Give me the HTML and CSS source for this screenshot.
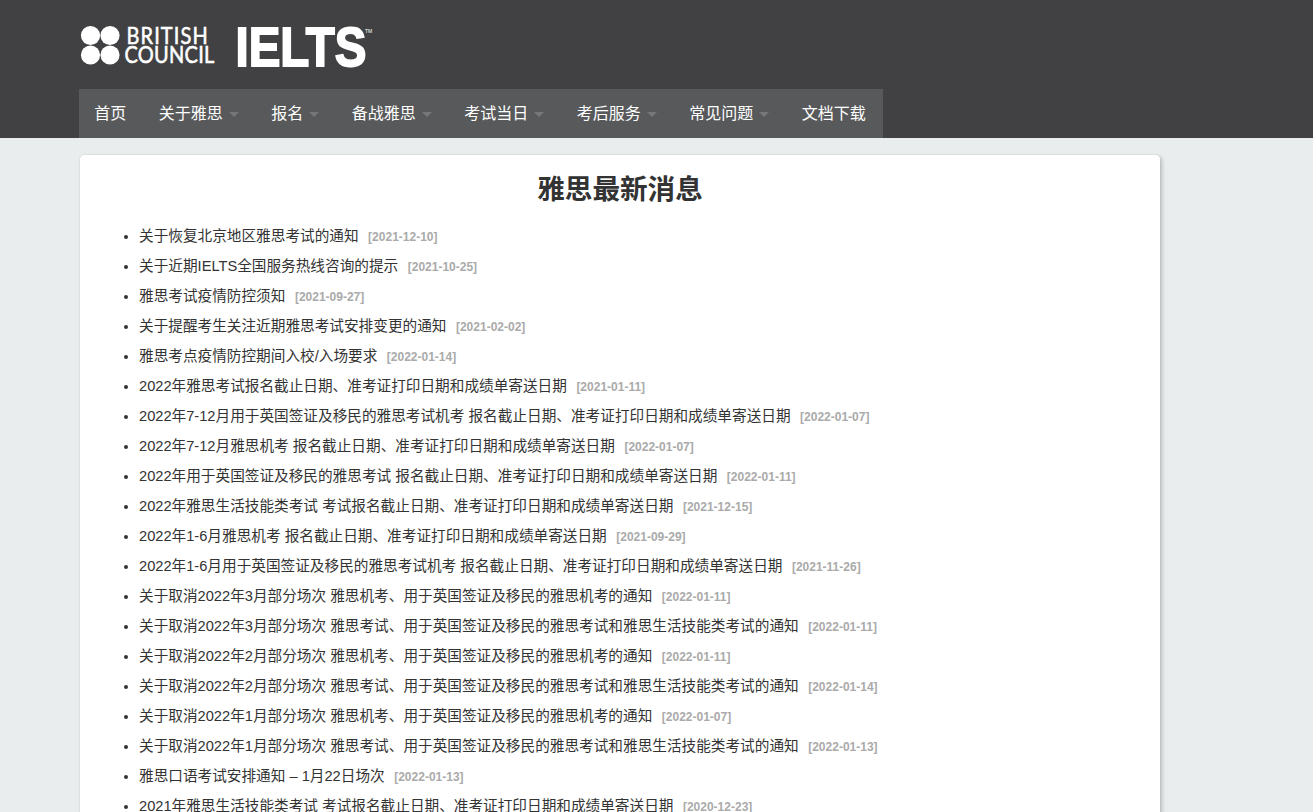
FILE: index.html
```html
<!DOCTYPE html>
<html lang="zh-CN">
<head>
<meta charset="utf-8">
<title>雅思最新消息</title>
<link rel="stylesheet" href="styles.css">
</head>
<body>
<header class="site-header">
  <div class="logo-row">
    <svg class="logo" width="300" height="44" viewBox="0 0 300 44" role="img" aria-label="British Council IELTS">
      <g fill="#fff">
        <circle cx="11.5" cy="11.5" r="9.6"/>
        <circle cx="31" cy="11.5" r="9.6"/>
        <circle cx="11.5" cy="31" r="9.6"/>
        <circle cx="31" cy="31" r="9.6"/>
        <text class="logo-bc logo-bc-top" transform="translate(47.5 20) scale(1 1.12)">BRITISH</text>
        <text class="logo-bc logo-bc-bottom" transform="translate(45.5 39) scale(1 1.12)">COUNCIL</text>
        <text class="logo-ielts" transform="translate(156.5 41.5) scale(1 1.15)">IELTS</text>
        <text class="logo-tm" x="286" y="8.5">TM</text>
      </g>
    </svg>
  </div>
  <nav class="main-nav">
    <a class="nav-item">首页</a>
    <a class="nav-item has-menu">关于雅思</a>
    <a class="nav-item has-menu">报名</a>
    <a class="nav-item has-menu">备战雅思</a>
    <a class="nav-item has-menu">考试当日</a>
    <a class="nav-item has-menu">考后服务</a>
    <a class="nav-item has-menu">常见问题</a>
    <a class="nav-item">文档下载</a>
  </nav>
</header>
<main class="card">
  <h1 class="card-title">雅思最新消息</h1>
  <ul class="news">
    <li><a>关于恢复北京地区雅思考试的通知</a><span class="date">[2021-12-10]</span></li>
    <li><a>关于近期IELTS全国服务热线咨询的提示</a><span class="date">[2021-10-25]</span></li>
    <li><a>雅思考试疫情防控须知</a><span class="date">[2021-09-27]</span></li>
    <li><a>关于提醒考生关注近期雅思考试安排变更的通知</a><span class="date">[2021-02-02]</span></li>
    <li><a>雅思考点疫情防控期间入校/入场要求</a><span class="date">[2022-01-14]</span></li>
    <li><a>2022年雅思考试报名截止日期、准考证打印日期和成绩单寄送日期</a><span class="date">[2021-01-11]</span></li>
    <li><a>2022年7-12月用于英国签证及移民的雅思考试机考 报名截止日期、准考证打印日期和成绩单寄送日期</a><span class="date">[2022-01-07]</span></li>
    <li><a>2022年7-12月雅思机考 报名截止日期、准考证打印日期和成绩单寄送日期</a><span class="date">[2022-01-07]</span></li>
    <li><a>2022年用于英国签证及移民的雅思考试 报名截止日期、准考证打印日期和成绩单寄送日期</a><span class="date">[2022-01-11]</span></li>
    <li><a>2022年雅思生活技能类考试 考试报名截止日期、准考证打印日期和成绩单寄送日期</a><span class="date">[2021-12-15]</span></li>
    <li><a>2022年1-6月雅思机考 报名截止日期、准考证打印日期和成绩单寄送日期</a><span class="date">[2021-09-29]</span></li>
    <li><a>2022年1-6月用于英国签证及移民的雅思考试机考 报名截止日期、准考证打印日期和成绩单寄送日期</a><span class="date">[2021-11-26]</span></li>
    <li><a>关于取消2022年3月部分场次 雅思机考、用于英国签证及移民的雅思机考的通知</a><span class="date">[2022-01-11]</span></li>
    <li><a>关于取消2022年3月部分场次 雅思考试、用于英国签证及移民的雅思考试和雅思生活技能类考试的通知</a><span class="date">[2022-01-11]</span></li>
    <li><a>关于取消2022年2月部分场次 雅思机考、用于英国签证及移民的雅思机考的通知</a><span class="date">[2022-01-11]</span></li>
    <li><a>关于取消2022年2月部分场次 雅思考试、用于英国签证及移民的雅思考试和雅思生活技能类考试的通知</a><span class="date">[2022-01-14]</span></li>
    <li><a>关于取消2022年1月部分场次 雅思机考、用于英国签证及移民的雅思机考的通知</a><span class="date">[2022-01-07]</span></li>
    <li><a>关于取消2022年1月部分场次 雅思考试、用于英国签证及移民的雅思考试和雅思生活技能类考试的通知</a><span class="date">[2022-01-13]</span></li>
    <li><a>雅思口语考试安排通知 – 1月22日场次</a><span class="date">[2022-01-13]</span></li>
    <li><a>2021年雅思生活技能类考试 考试报名截止日期、准考证打印日期和成绩单寄送日期</a><span class="date">[2020-12-23]</span></li>
  </ul>
</main>
</body>
</html>
```

FILE: styles.css
```css
html, body {
  margin: 0;
  height: 100%;
  overflow: hidden;
}
body {
  background: #e9edee;
  color: #333;
  font-family: "Liberation Sans", "Noto Sans CJK SC", sans-serif;
}
.site-header {
  background: #414143;
  height: 138px;
  padding-left: 79px;
  box-sizing: border-box;
}
.logo-row {
  height: 89px;
  padding-top: 24px;
  box-sizing: border-box;
}
.logo {
  display: block;
}
.logo-bc {
  font-family: "Lato", sans-serif;
  font-size: 20px;
  font-weight: 400;
  stroke: #fff;
  stroke-width: .5px;
}
.logo-bc-top {
  letter-spacing: 1.1px;
}
.logo-bc-bottom {
  letter-spacing: .25px;
}
.logo-ielts {
  font-family: "Liberation Sans", sans-serif;
  font-size: 47.5px;
  font-weight: 700;
  stroke: #fff;
  stroke-width: 1.6px;
}
.logo-tm {
  font-family: "Liberation Sans", sans-serif;
  font-size: 5px;
}
.main-nav {
  display: flex;
  width: 803.75px;
  height: 49px;
  padding-left: .25px;
  background: #58595b;
}
.nav-item {
  display: flex;
  flex: none;
  align-items: center;
  padding: 0 17.5px 4px 15px;
  height: 49px;
  box-sizing: border-box;
  color: #fff;
  font-size: 16px;
  white-space: nowrap;
}
.nav-item.has-menu::after {
  content: "";
  margin: 5px 0 0 6px;
  border-style: solid;
  border-width: 5px 5px 0;
  border-color: #777 transparent transparent;
}
.card {
  width: 1080px;
  margin: 17px 0 0 80px;
  background: #fff;
  border-radius: 4px;
  box-shadow: 0 0 1px rgba(0, 0, 0, .25), 2px 2px 4px rgba(0, 0, 0, .2);
  padding-top: 15px;
  height: 800px;
  box-sizing: border-box;
}
.card-title {
  margin: 0 0 11px;
  text-align: center;
  font-size: 27.6px;
  line-height: 40px;
  font-weight: 700;
  color: #333;
}
.news {
  margin: 0;
  padding: 0 0 0 59px;
  list-style: disc;
  font-size: 14.65px;
}
.news li {
  height: 30px;
  line-height: 30px;
}
.date {
  margin-left: 9.5px;
  font-size: 12px;
  font-weight: 700;
  color: #aaa;
}
```
